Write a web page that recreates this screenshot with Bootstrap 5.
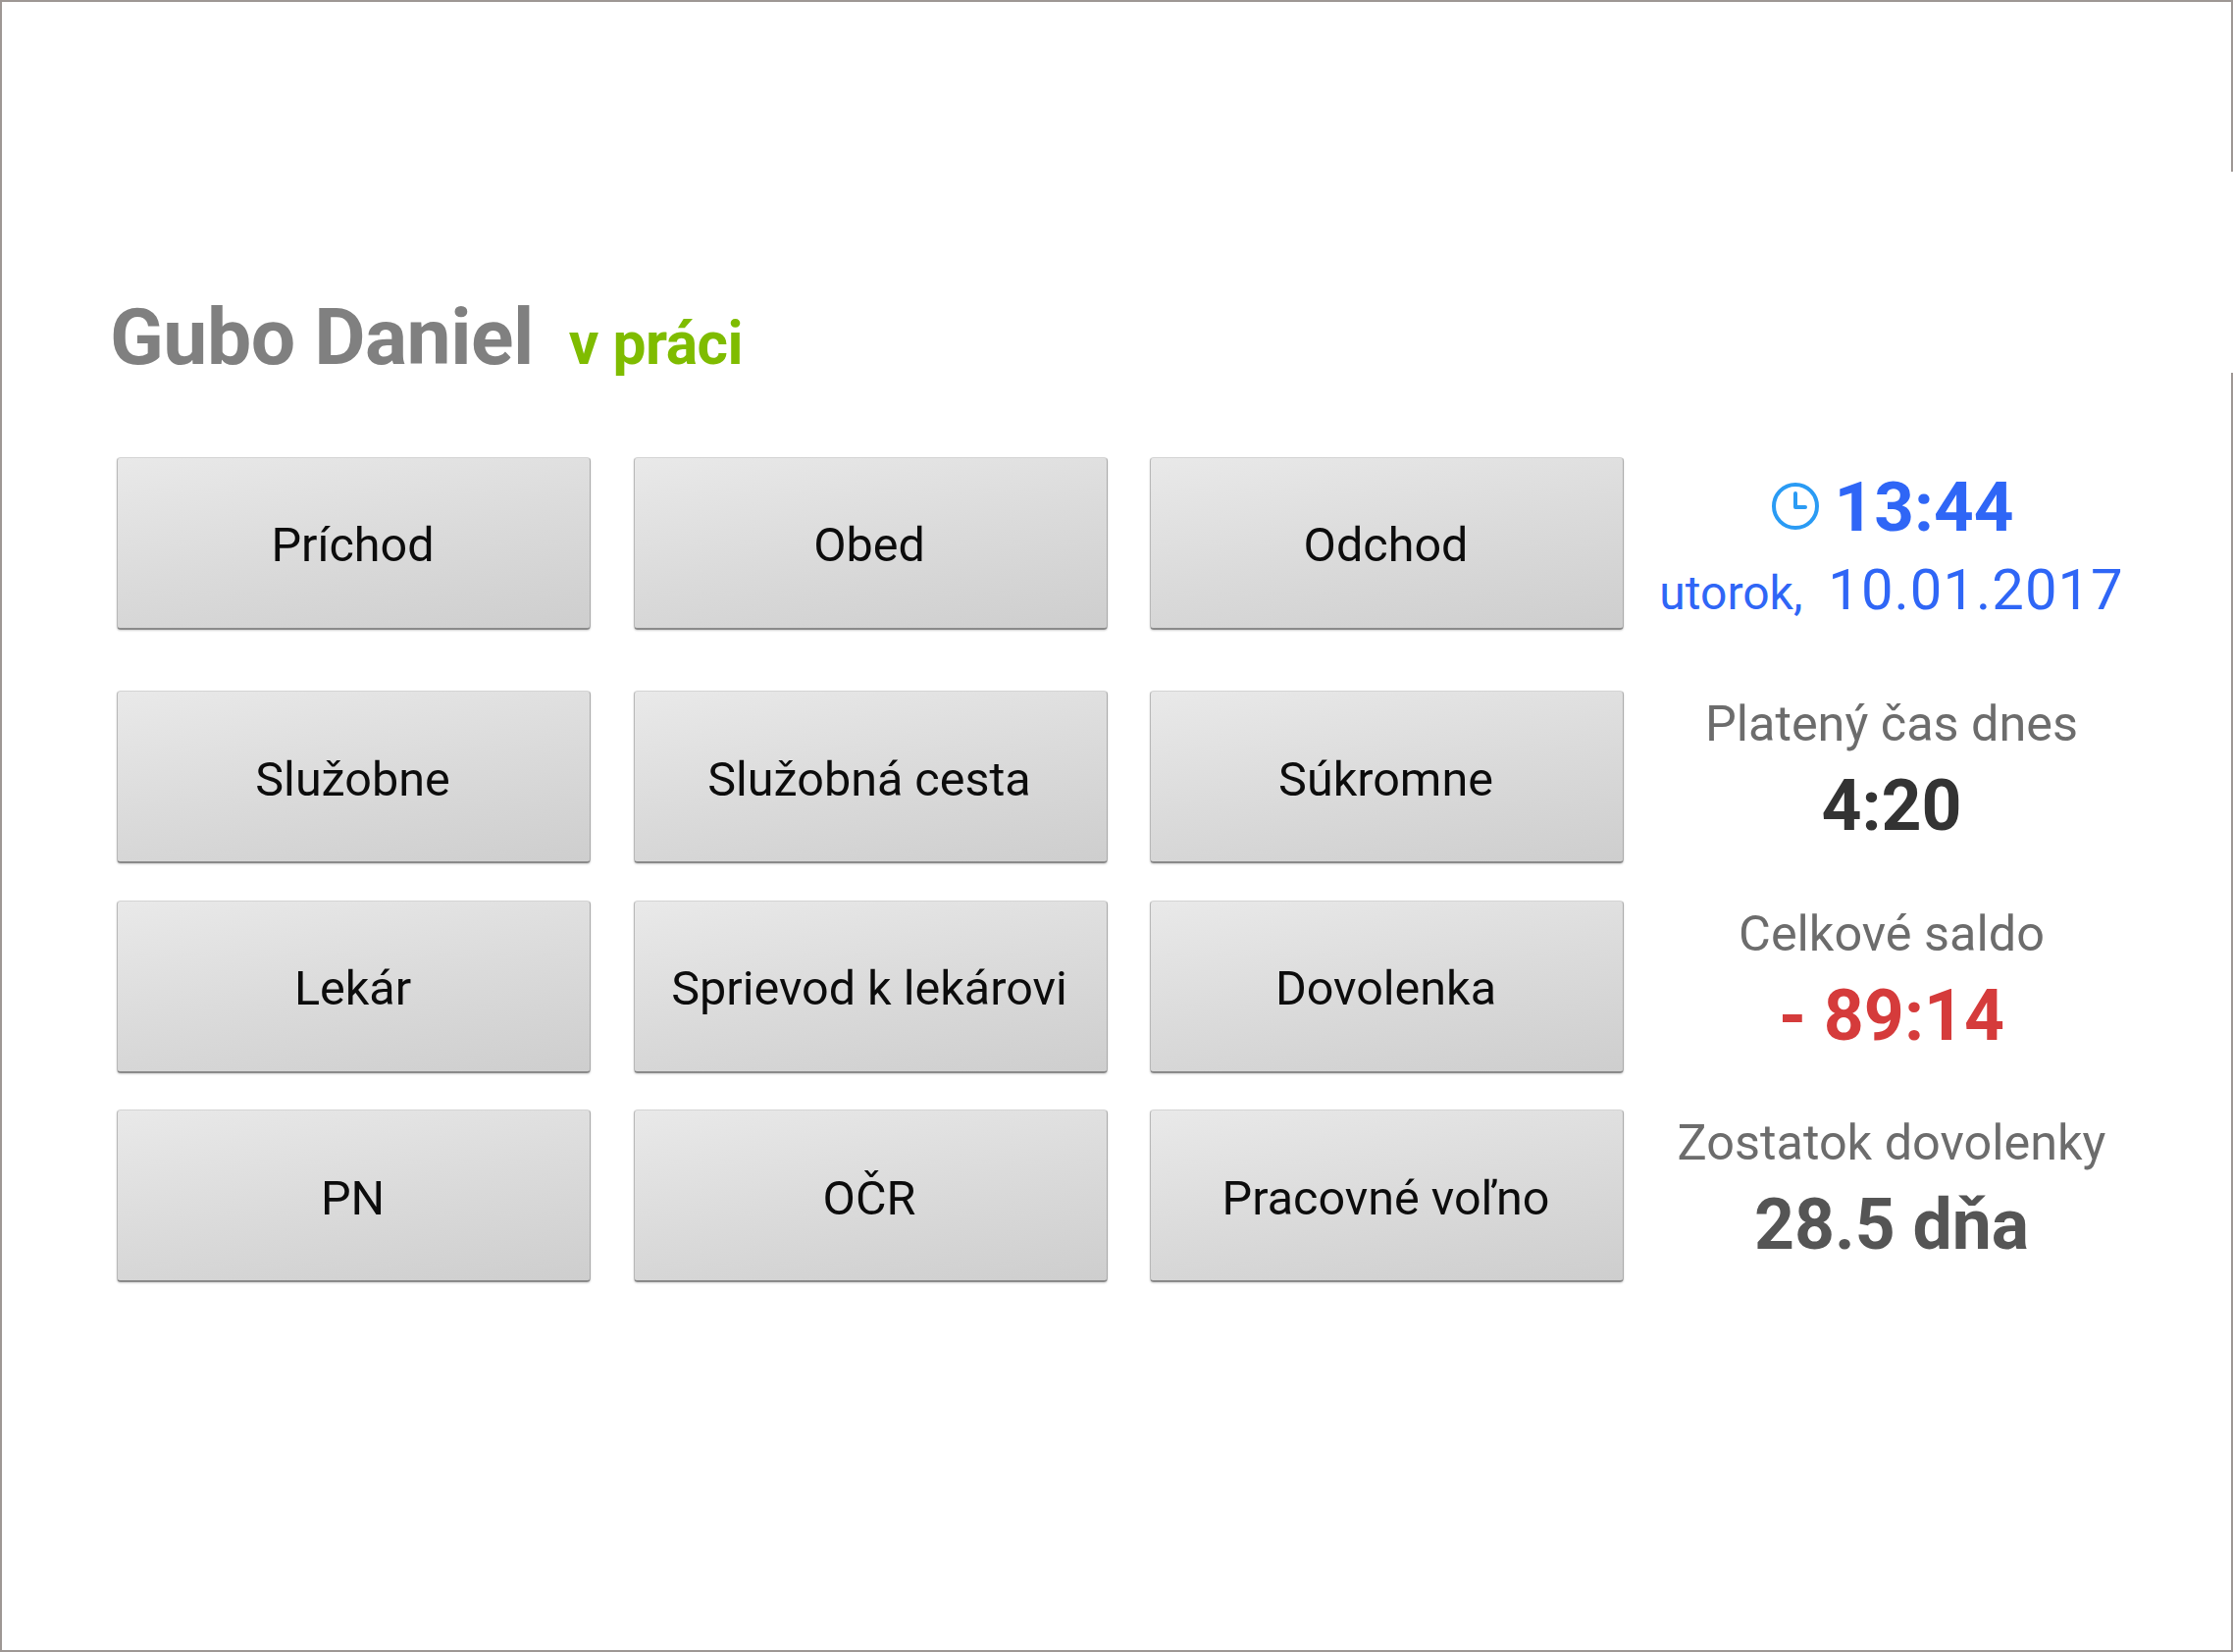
<!DOCTYPE html>
<html lang="sk">
<head>
<meta charset="utf-8">
<title>Dochádzka</title>
<link rel="stylesheet" href="https://cdn.jsdelivr.net/npm/bootstrap@5.3.0/dist/css/bootstrap.min.css">
<style>
html,body{margin:0;height:100%;background:#fff;}
body{font-family:Roboto,"Liberation Sans",sans-serif;}
.frame{height:1684px;width:2276px;border:solid #9e9794;border-width:2px 0 2px 2px;padding:0 0 0 110px;
 background:linear-gradient(#9e9794,#9e9794) right top/2px 173px no-repeat,linear-gradient(#9e9794,#9e9794) right bottom/2px 1302px no-repeat,#fff;}
.head-line{padding-top:297px;height:464px;align-items:baseline;gap:36px;}
.who{font-size:80.5px;font-weight:700;color:#808080;line-height:90px;letter-spacing:-.5px;}
.state{font-size:60.5px;font-weight:700;color:#7fbc00;line-height:68px;letter-spacing:-.5px;}
.board{display:grid;grid-template-columns:repeat(3,483px) 480px;column-gap:43.5px;grid-template-rows:201px 176px 176px 176px;row-gap:37.4px;padding-left:7px;}
.tile{width:483px;height:176px;font-size:48.5px;line-height:1.1;color:#0c0c0c;background:linear-gradient(170deg,#e9e9e9 0%,#dbdbdb 50%,#cecece 100%);border:0;border-bottom:2px solid #8a8a8a;border-left:1px solid #b8b8b8;border-right:1px solid #aaa;border-top:1px solid #d4d4d4;border-radius:4px;box-shadow:0 1px 2px rgba(0,0,0,.18);padding:5px 2px 0 0;}
.tile:hover{color:#0c0c0c;background:linear-gradient(170deg,#e9e9e9 0%,#dbdbdb 50%,#cecece 100%);border-color:#d4d4d4 #aaa #8a8a8a #b8b8b8;}
.side{text-align:center;margin-left:-21px;padding-top:4px;}
.side-now{padding-top:9px;}
.clock-line{font-size:71px;font-weight:700;color:#2f66f6;line-height:84px;gap:14px;}
.clock-line svg{margin-top:-2px;}
.date-line{color:#2f66f6;line-height:64px;align-items:baseline;gap:26px;margin-top:10px;}
.dn{font-size:48px;}
.dt{font-size:58px;letter-spacing:1px;}
.cap{font-size:50.4px;color:#6c6c6c;line-height:60px;}
.val{font-size:71.5px;font-weight:700;line-height:84px;margin-top:12px;}
.v-dark{color:#333;}.v-red{color:#d53b3b;}.v-gray{color:#555;}
</style>
</head>
<body>
<div class="frame">
  <div class="head-line d-flex">
    <span class="who">Gubo Daniel</span>
    <span class="state">v práci</span>
  </div>
  <div class="board">
    <button class="btn tile">Príchod</button>
    <button class="btn tile">Obed</button>
    <button class="btn tile">Odchod</button>
    <div class="side side-now">
      <div class="clock-line d-flex justify-content-center align-items-center">
        <svg width="52" height="52" viewBox="0 0 52 52" fill="none" stroke="#2a9bf4" stroke-width="4" stroke-linecap="round" stroke-linejoin="round"><circle cx="26" cy="26" r="22"/><path d="M26 13v14h10"/></svg>
        <span>13:44</span>
      </div>
      <div class="date-line d-flex justify-content-center"><span class="dn">utorok,</span><span class="dt">10.01.2017</span></div>
    </div>
    <button class="btn tile">Služobne</button>
    <button class="btn tile">Služobná cesta</button>
    <button class="btn tile">Súkromne</button>
    <div class="side"><div class="cap">Platený čas dnes</div><div class="val v-dark">4:20</div></div>
    <button class="btn tile">Lekár</button>
    <button class="btn tile">Sprievod k lekárovi</button>
    <button class="btn tile">Dovolenka</button>
    <div class="side"><div class="cap">Celkové saldo</div><div class="val v-red">- 89:14</div></div>
    <button class="btn tile">PN</button>
    <button class="btn tile">OČR</button>
    <button class="btn tile">Pracovné voľno</button>
    <div class="side"><div class="cap">Zostatok dovolenky</div><div class="val v-gray">28.5 dňa</div></div>
  </div>
</div>
<script src="https://cdn.jsdelivr.net/npm/bootstrap@5.3.0/dist/js/bootstrap.bundle.min.js"></script>
</body>
</html>
